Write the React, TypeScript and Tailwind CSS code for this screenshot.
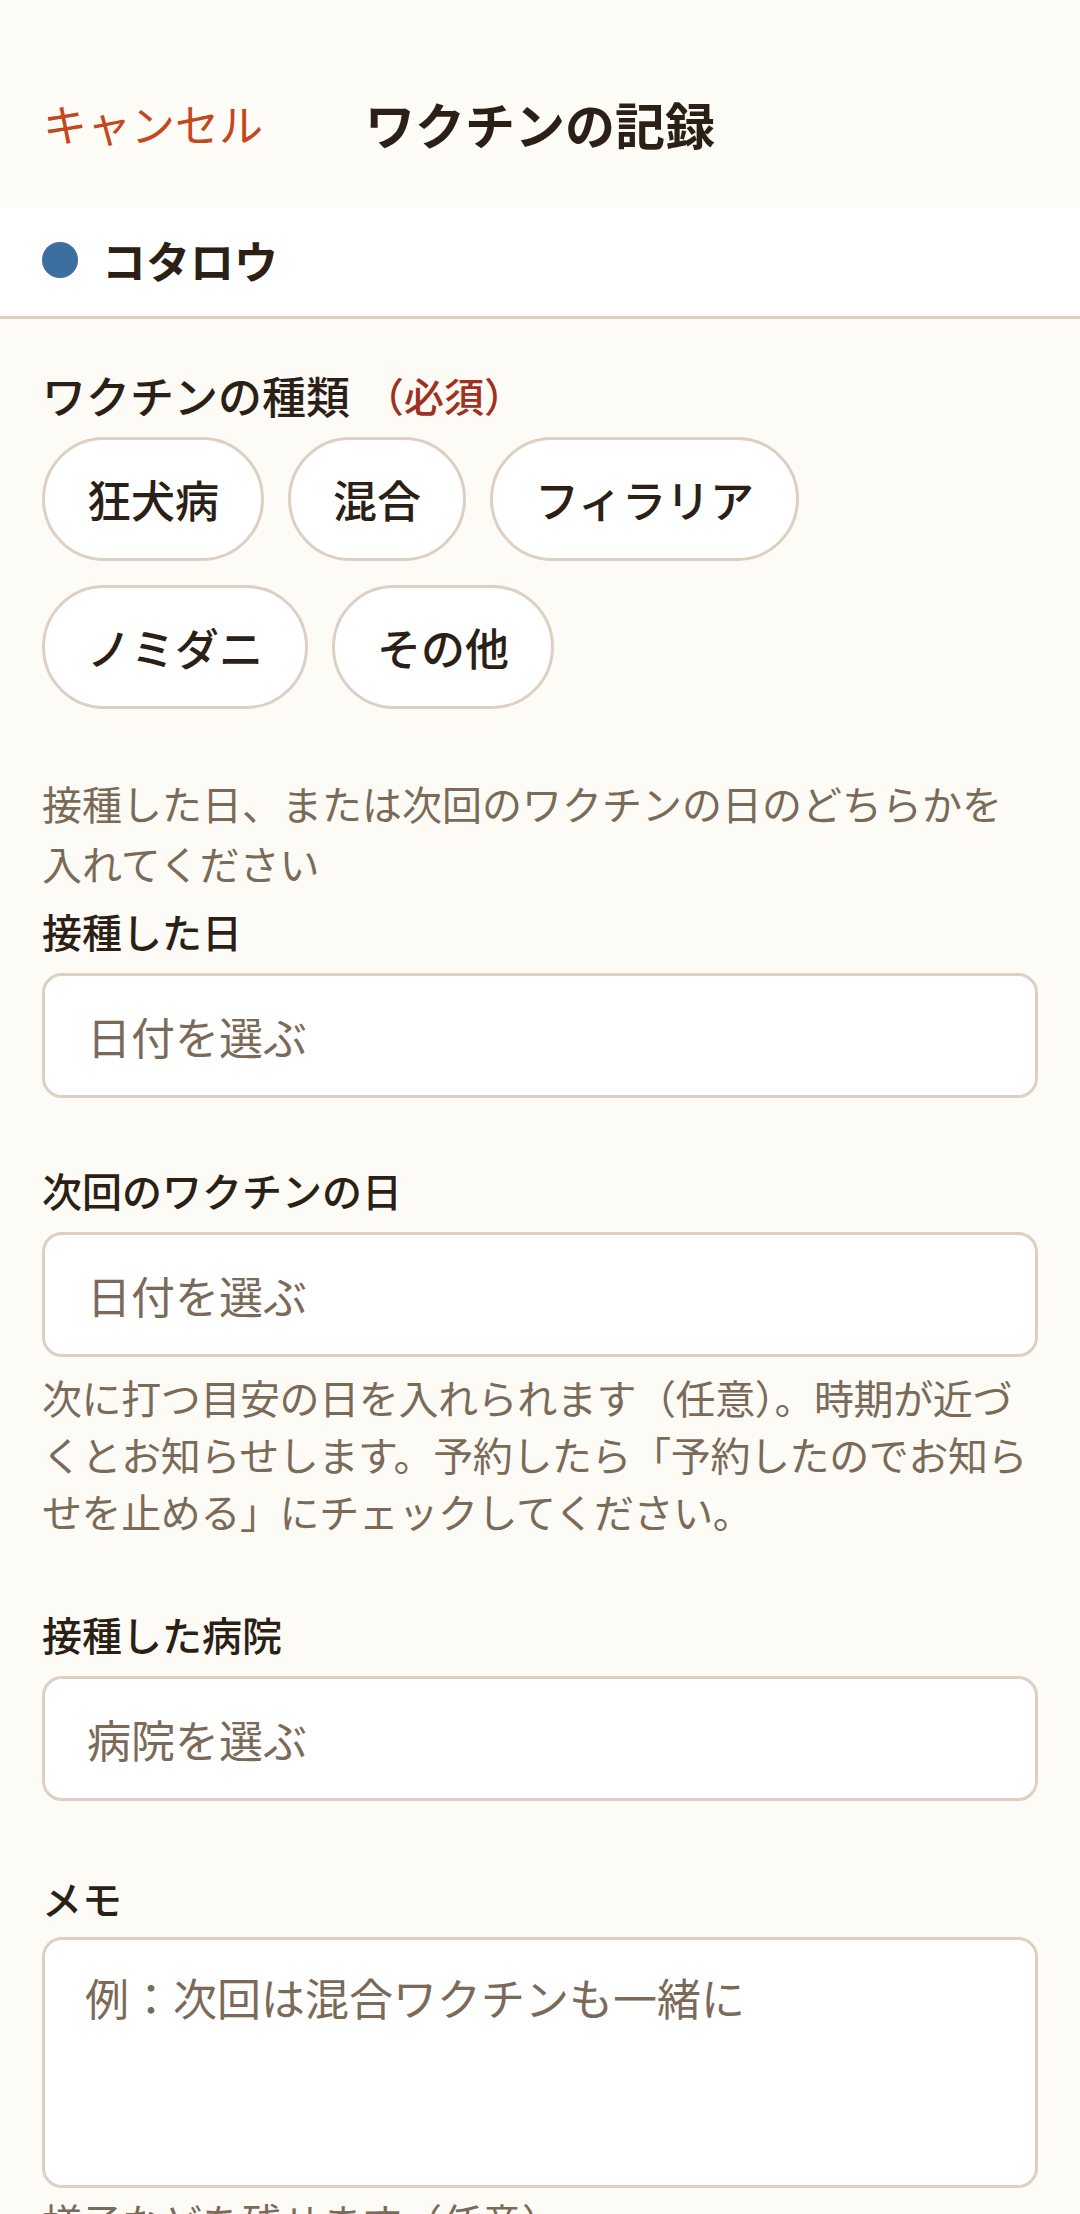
import React from "react";

const FONT = { fontFamily: '"Noto Sans CJK JP", "Noto Sans", sans-serif' };

function Chip({ label }: { label: string }) {
  return (
    <button
      type="button"
      className="h-[124px] px-[42px] rounded-full border-[3px] border-[#ddd0c2] bg-white text-[44px] leading-[60px] font-medium text-[#2b1f16] flex items-center"
    >
      {label}
    </button>
  );
}

function FieldLabel({ children }: { children: React.ReactNode }) {
  return (
    <div className="text-[40px] leading-[56px] font-medium text-[#2b1f16]">{children}</div>
  );
}

function PickerInput({ placeholder }: { placeholder: string }) {
  return (
    <input
      readOnly
      placeholder={placeholder}
      className="mt-[14px] w-full h-[125px] rounded-[20px] border-[3px] border-[#ddd0c2] bg-white px-[42px] text-[44px] text-[#2b1f16] placeholder:text-[#7b6a57] outline-none"
    />
  );
}

export default function App() {
  return (
    <div className="w-[1080px] min-h-[2214px] bg-[#fdfbf6] overflow-hidden" style={FONT}>
      {/* Header */}
      <div className="h-[208px] bg-[#fdfcf7] grid grid-cols-[1fr_auto_1fr] items-start pt-[93px] px-[43px]">
        <div className="text-[44px] leading-[60px] text-[#c4471d]">キャンセル</div>
        <div className="text-[50px] leading-[60px] font-bold text-[#2b1f16]">ワクチンの記録</div>
        <div />
      </div>

      {/* Pet row */}
      <div className="h-[111px] bg-white border-b-[3px] border-[#ddd0c2] flex items-center px-[42px] gap-[24px] pb-[4px]">
        <span className="w-[36px] h-[36px] rounded-full bg-[#3c6e9f] shrink-0" />
        <span className="text-[44px] leading-[60px] font-bold text-[#2b1f16]">コタロウ</span>
      </div>

      {/* Body */}
      <div className="px-[42px] pt-[46px]">
        <div className="text-[44px] leading-[60px] font-medium text-[#2b1f16] flex items-center">
          <span>ワクチンの種類</span>
          <span className="ml-[14px] text-[40px] text-[#a0301f]">（必須）</span>
        </div>

        <div className="mt-[12px] flex flex-wrap gap-x-[24px] gap-y-[24px]">
          <Chip label="狂犬病" />
          <Chip label="混合" />
          <Chip label="フィラリア" />
          <Chip label="ノミダニ" />
          <Chip label="その他" />
        </div>

        <p className="mt-[64px] text-[40px] leading-[60px] text-[#7b6a57]">
          接種した日、または次回のワクチンの日のどちらかを入れてください
        </p>

        <div className="mt-[10px]">
          <FieldLabel>接種した日</FieldLabel>
          <PickerInput placeholder="日付を選ぶ" />
        </div>

        <div className="mt-[64px]">
          <FieldLabel>次回のワクチンの日</FieldLabel>
          <PickerInput placeholder="日付を選ぶ" />
          <p className="mt-[12px] text-[40px] leading-[57px] text-[#7b6a57] tracking-[-0.4px]">
            <span className="block whitespace-nowrap">次に打つ目安の日を入れられます（任意）。時期が近づ</span>
            <span className="block whitespace-nowrap">くとお知らせします。予約したら「予約したのでお知ら</span>
            <span className="block whitespace-nowrap">せを止める」にチェックしてください。</span>
          </p>
        </div>

        <div className="mt-[66px]">
          <FieldLabel>接種した病院</FieldLabel>
          <PickerInput placeholder="病院を選ぶ" />
        </div>

        <div className="mt-[69px]">
          <FieldLabel>メモ</FieldLabel>
          <textarea
            placeholder="例：次回は混合ワクチンも一緒に"
            className="mt-[11px] block w-full h-[251px] resize-none rounded-[20px] border-[3px] border-[#ddd0c2] bg-white px-[40px] pt-[24px] text-[44px] leading-[66px] text-[#2b1f16] placeholder:text-[#7b6a57] outline-none"
          />
          <p className="mt-[6px] text-[40px] leading-[54px] text-[#7b6a57]">様子などを残せます（任意）</p>
        </div>
      </div>
    </div>
  );
}
